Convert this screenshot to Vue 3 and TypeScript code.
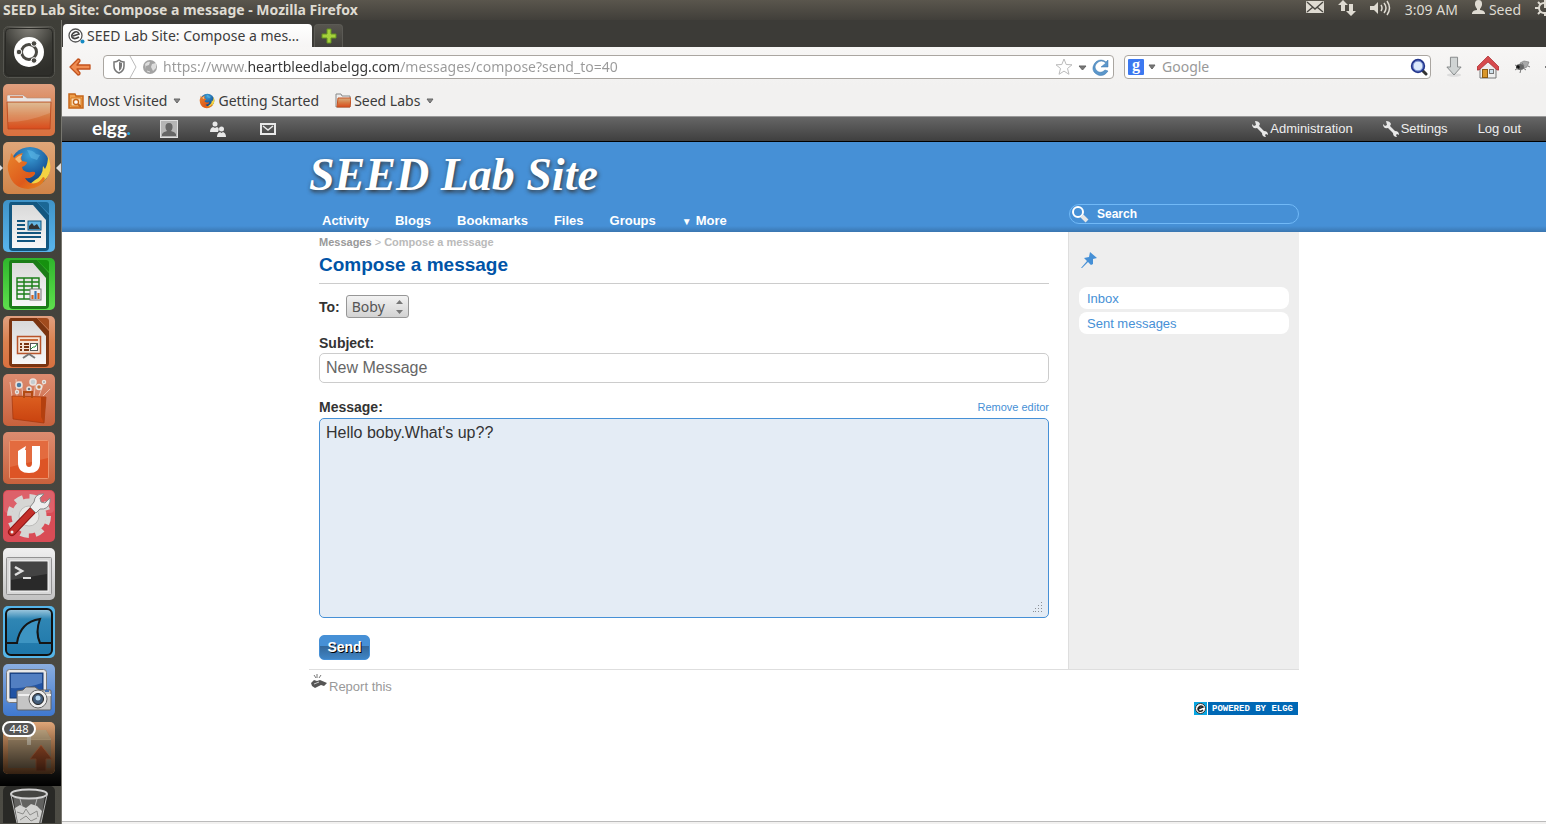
<script setup lang="ts">
import { ref } from 'vue'

const url = ref('https://www.heartbleedlabelgg.com/messages/compose?send_to=40')
const engineQuery = ref('')
const siteQuery = ref('')
const recipient = ref('Boby')
const subject = ref('New Message')
const body = ref("Hello boby.What's up??")

const siteMenu: string[] = ['Activity', 'Blogs', 'Bookmarks', 'Files', 'Groups']
const folders: string[] = ['Inbox', 'Sent messages']
</script>

<template>
  <div class="desktop">
    <svg class="defs" width="0" height="0" aria-hidden="true">
      <defs>
        <linearGradient id="orange" x1="0" y1="0" x2="0" y2="1"><stop offset="0" stop-color="#e0a080" /><stop offset=".5" stop-color="#d9814f" /><stop offset="1" stop-color="#d9703f" /></linearGradient>
        <linearGradient id="tan" x1="0" y1="0" x2="0" y2="1"><stop offset="0" stop-color="#dfa679" /><stop offset="1" stop-color="#d08448" /></linearGradient>
        <linearGradient id="rust" x1="0" y1="0" x2="0" y2="1"><stop offset="0" stop-color="#dc8c70" /><stop offset="1" stop-color="#c8613c" /></linearGradient>
        <linearGradient id="folder" x1="0" y1="0" x2="0" y2="1"><stop offset="0" stop-color="#d9b183" /><stop offset=".5" stop-color="#d67c45" /><stop offset="1" stop-color="#da4c1d" /></linearGradient>
        <linearGradient id="blue" x1="0" y1="0" x2="0" y2="1"><stop offset="0" stop-color="#3f93c8" /><stop offset="1" stop-color="#59b5ec" /></linearGradient>
        <linearGradient id="green" x1="0" y1="0" x2="0" y2="1"><stop offset="0" stop-color="#2fb52c" /><stop offset="1" stop-color="#5fe04e" /></linearGradient>
        <linearGradient id="paper" x1="0" y1="0" x2="0" y2="1"><stop offset="0" stop-color="#d9d9d9" /><stop offset="1" stop-color="#f8f8f8" /></linearGradient>
        <linearGradient id="silver" x1="0" y1="0" x2="0" y2="1"><stop offset="0" stop-color="#f0f0f0" /><stop offset="1" stop-color="#c2c2c2" /></linearGradient>
        <linearGradient id="shark" x1="0" y1="0" x2="0" y2="1"><stop offset="0" stop-color="#a3cbe0" /><stop offset=".22" stop-color="#2f86b4" /><stop offset="1" stop-color="#1d76a9" /></linearGradient>
        <linearGradient id="bag" x1="0" y1="0" x2="0" y2="1"><stop offset="0" stop-color="#dc5f20" /><stop offset="1" stop-color="#c9420f" /></linearGradient>
        <linearGradient id="shot" x1="0" y1="0" x2="0" y2="1"><stop offset="0" stop-color="#8aaee0" /><stop offset="1" stop-color="#3f78cf" /></linearGradient>
        <linearGradient id="shade" x1="0" y1="0" x2="0" y2="1"><stop offset="0" stop-color="#000" stop-opacity="0" /><stop offset="1" stop-color="#000" stop-opacity=".75" /></linearGradient>
        <radialGradient id="globe" cx=".5" cy=".2" r=".8"><stop offset="0" stop-color="#3ba0d8" /><stop offset=".6" stop-color="#1a5a9c" /><stop offset="1" stop-color="#10356d" /></radialGradient>
        <linearGradient id="fox" x1="0" y1="0" x2="1" y2="1"><stop offset="0" stop-color="#e8842c" /><stop offset=".6" stop-color="#de5a1b" /><stop offset="1" stop-color="#e98b1e" /></linearGradient>
        <radialGradient id="glow" cx=".5" cy="0" r=".9"><stop offset="0" stop-color="#85837c" /><stop offset=".6" stop-color="#3a3a35" /><stop offset="1" stop-color="#2e2e2a" /></radialGradient>
        <symbol id="firefox" viewBox="0 0 46 46">
          <circle cx="24" cy="22" r="20" fill="url(#globe)" />
          <path d="M21 5q6 0 9 4l4 1-3 5-6-2z" fill="#5db6e4" opacity=".6" />
          <path d="M42 11q6 15-3 24-8 9-20 8l10-8q8-4 8-14l2 3q3-5 3-13z" fill="#f4d342" />
          <path d="M40 33Q34 44 22 44 7 43 3 29 0 20 4 14l1-6q2 1 3 5 3-4 9-5-3 4-1 8l5 1q0 3-5 5l1 3q4 3 8 2 5-1 4 2-3 5-10 4 4 7 11 5 4-1 7-6 3 1 1 3z" fill="url(#fox)" />
          <path d="M9 14q4-4 7-4-3 4 0 6l-3 2z" fill="#f7b873" />
        </symbol>
        <symbol id="wrench" viewBox="0 0 16 16">
          <path d="M3 0q4 0 5 3l-1 2 5 5q4 0 4 4l-2-1-1 1 1 2q-4 0-4-4L5 7Q0 8 0 3l2 2 2-1z" fill="#e8e8e8" />
        </symbol>
      </defs>
    </svg>

    <header class="panel">
      <span class="panel-title">SEED Lab Site: Compose a message - Mozilla Firefox</span>
      <div class="indicators">
        <svg width="18" height="14" viewBox="0 0 18 14"><rect y="1" width="18" height="12" rx="1" fill="#dfdbd2" /><path d="M1 2l8 7 8-7M1 12l6-5M17 12l-6-5" fill="none" stroke="#4a4842" stroke-width="1.400" /></svg>
        <svg width="18" height="16" viewBox="0 0 18 16"><path d="M5 0l5 5H7v6H3V5H0zM11 4h4v7h3l-5 5-5-5h3z" fill="#dfdbd2" /></svg>
        <svg width="21" height="16" viewBox="0 0 21 16"><path d="M0 6h4l4-4v12l-4-4H0z" fill="#dfdbd2" /><path d="M11 5q2 3 0 6M14 3q4 5 0 10M17 1q5 7 0 14" fill="none" stroke="#dfdbd2" stroke-width="1.500" /></svg>
        <span class="clock">3:09 AM</span>
        <span class="user"><svg width="13" height="14" viewBox="0 0 13 14"><path d="M6.500 0q4 0 3.500 5-.5 2-2 4l0 1q4 0 5 3v1H0v-1q1-3 5-3V9Q3.500 7 3 5 2.500 0 6.500 0z" fill="#dfdbd2" /></svg>Seed</span>
        <svg width="11" height="16" viewBox="0 0 11 16"><path d="M9 3a5 5 0 0 0 0 10" fill="none" stroke="#dfdbd2" stroke-width="2" /><path d="M3 2l3 3M0 8h4M3 14l3-3M10 12v4M10 0v8" fill="none" stroke="#dfdbd2" stroke-width="2" /></svg>
      </div>
    </header>

    <div class="workspace">
      <nav class="launcher" aria-label="Launcher">
        <button aria-label="Dash home"><svg viewBox="0 0 52 52"><rect x=".5" y=".5" width="51" height="51" rx="5" fill="url(#glow)" stroke="#55554f" /><rect x="2.500" y="2.500" width="47" height="47" rx="4" fill="none" stroke="#292925" /><circle cx="26" cy="26" r="15" fill="#fff" /><circle cx="26" cy="26" r="7.500" fill="none" stroke="#4a4944" stroke-width="3" /><g fill="#4a4944" stroke="#fff"><circle cx="16" cy="26" r="2.800" /><circle cx="31" cy="17.500" r="2.800" /><circle cx="31" cy="34.500" r="2.800" /></g></svg></button>
        <button aria-label="Files"><svg viewBox="0 0 52 52"><rect width="52" height="52" rx="5" fill="url(#orange)" /><path d="M5 11h15l4 3h23q1 0 1 1v5H4v-8q0-1 1-1z" fill="#e9e6e4" stroke="#b58a76" stroke-width=".6" /><path d="M7 13h13" stroke="#d98a62" stroke-width="2" /><path d="M4 18h44l-1 27H5z" fill="url(#folder)" stroke="#b8441c" stroke-width=".8" /><path d="M5 19h42v10Q25 38 5 38z" fill="#fff" opacity=".15" /></svg></button>
        <button class="active" aria-label="Firefox"><svg viewBox="0 0 52 52"><rect width="52" height="52" rx="5" fill="url(#tan)" /><use href="#firefox" x="3" y="3" width="46" height="46" /></svg></button>
        <button aria-label="Writer"><svg viewBox="0 0 52 52"><rect width="52" height="52" rx="5" fill="url(#blue)" /><path d="M8 2h26l12 13v32q0 4-4 4H10q-4 0-4-4V6q0-4 2-4z" fill="#13567f" /><path d="M34 2h9q3 0 3 3v9z" fill="#1b6795" /><path d="M9 5h21l13 15v28H9z" fill="url(#paper)" /><path d="M14 21h8M14 25h8M14 29h8M14 33h24M14 37h24M14 41h18" stroke="#13567f" stroke-width="2" /><rect x="25" y="21" width="13" height="9" fill="#66b7e4" stroke="#13567f" /><path d="M26 29v-3l3-3 2 3 3-2 3 5z" fill="#333" /></svg></button>
        <button aria-label="Calc"><svg viewBox="0 0 52 52"><rect width="52" height="52" rx="5" fill="url(#green)" /><path d="M8 2h26l12 13v32q0 4-4 4H10q-4 0-4-4V6q0-4 2-4z" fill="#1b7d18" /><path d="M34 2h9q3 0 3 3v9z" fill="#16910f" /><path d="M9 5h21l13 15v28H9z" fill="url(#paper)" /><path d="M14 20h22v21H14zM14 24h22M14 28h22M14 32h22M14 36h22M21 20v21M29 20v21" fill="none" stroke="#1b7d18" stroke-width="1.400" /><rect x="27" y="31" width="11" height="11" fill="#eee" stroke="#777" /><path d="M29.500 41v-4M35.500 41v-6" stroke-width="2.200" stroke="#d5641e" /><path d="M32.500 41v-8" stroke-width="2.200" stroke="#3b78b5" /></svg></button>
        <button aria-label="Impress"><svg viewBox="0 0 52 52"><rect width="52" height="52" rx="5" fill="url(#orange)" /><path d="M8 2h26l12 13v32q0 4-4 4H10q-4 0-4-4V6q0-4 2-4z" fill="#7a3410" /><path d="M34 2h9q3 0 3 3v9z" fill="#a14b1d" /><path d="M9 5h21l13 15v28H9z" fill="url(#paper)" /><rect x="14.500" y="20.500" width="23" height="17" fill="#f4e3d5" stroke="#b8542a" stroke-width="1.500" /><path d="M17 24h18" stroke="#c96b3a" stroke-width="2" /><path d="M17 28h2M17 31h2M17 34h2M21 28h5M21 31h5M21 34h5" stroke="#7a3410" stroke-width="2" /><rect x="27.500" y="27.500" width="7" height="7" fill="#fff" stroke="#555" /><path d="M28 33l2-2 2 0 2-3" fill="none" stroke="#28963b" /><path d="M26 38l-6 4M26 38l6 4" stroke="#777" stroke-width="2" /></svg></button>
        <button aria-label="Software Center"><svg viewBox="0 0 52 52"><rect width="52" height="52" rx="5" fill="url(#rust)" /><path d="M9 22L7 8M14 22L13 5M20 22L18 7M31 22l2-16M36 22l5-14M40 22l7-7" stroke="#f5d8ca" stroke-width="1" opacity=".7" /><g stroke="#e9e3df" stroke-width="1.500"><circle cx="16" cy="11" r="3" fill="#4a7ca3" /><circle cx="30" cy="8" r="3" fill="#c6cdd0" /><circle cx="36" cy="13" r="2.500" fill="#c0763f" /><circle cx="26" cy="15" r="2" fill="#68798a" /><circle cx="14" cy="18" r="1.500" fill="#777" /><circle cx="41" cy="8" r="1.500" fill="#777" /></g><path d="M9 22l34 1-2 26-31-4z" fill="url(#bag)" stroke="#a2370d" stroke-width=".7" /><path d="M38 23l5 0-2 26-3-6z" fill="#b4400f" /><path d="M21 24v-6h8v6" fill="none" stroke="#b24b12" stroke-width="2" /></svg></button>
        <button aria-label="Ubuntu One"><svg viewBox="0 0 52 52"><rect width="52" height="52" rx="5" fill="url(#rust)" /><rect x="6.500" y="8.500" width="39" height="38" rx="1" fill="#dd5426" stroke="#ec946e" /><path d="M7 9h38v17L7 35z" fill="#e77b50" opacity=".6" /><path d="M15 19l8-5-1 4 1 0v13q0 4 3 4t3-4V14h8v17q0 10-11 10T15 31z" fill="#fff" /></svg></button>
        <button aria-label="System Settings"><svg viewBox="0 0 52 52"><rect width="52" height="52" rx="5" fill="#d94c56" /><rect x="1" y="1" width="50" height="22" rx="4" fill="#fff" opacity=".12" /><circle cx="26" cy="26" r="19.500" fill="none" stroke="#d6d6d4" stroke-width="5" stroke-dasharray="8.500 6.800" /><circle cx="26" cy="26" r="17.500" fill="#d6d6d4" /><circle cx="26" cy="26" r="10" fill="#e9e9e7" stroke="#bdbdbb" /><path d="M9 42l21-22" stroke="#8e1414" stroke-width="8" stroke-linecap="round" /><path d="M9 42l21-22" stroke="#c42f2a" stroke-width="6" stroke-linecap="round" /><path d="M27 17l6 6 4-4q8 1 10-7V8l-5 5-4-1-1-4 4-4q-9-1-10 8z" fill="#eee" stroke="#888" /><circle cx="9" cy="42" r="1.500" fill="#eee" /></svg></button>
        <button aria-label="Terminal"><svg viewBox="0 0 52 52"><rect width="52" height="52" rx="5" fill="url(#silver)" /><rect x="3.500" y="9.500" width="45" height="37" rx="1" fill="#d8d8d8" stroke="#929292" /><rect x="7" y="13" width="38" height="30" fill="#292929" stroke="#f8f8f8" /><path d="M8 14h36v12L8 32z" fill="#fff" opacity=".12" /><path d="M12 19l7 4-7 4" fill="none" stroke="#ddd" stroke-width="2.500" /><path d="M20 30h8" stroke="#ddd" stroke-width="2" /></svg></button>
        <button aria-label="Wireshark"><svg viewBox="0 0 52 52"><rect width="52" height="52" rx="5" fill="#55b5e8" /><rect x="3" y="3" width="46" height="46" rx="5" fill="url(#shark)" stroke="#111" stroke-width="2" /><path d="M3 37h11Q17 16 37 13q-5 13 0 24h12" fill="#3d94c2" stroke="#151515" stroke-width="2" /></svg></button>
        <button aria-label="Screenshot"><svg viewBox="0 0 52 52"><rect width="52" height="52" rx="5" fill="url(#shot)" /><rect x="3.500" y="5.500" width="40" height="33" rx="3" fill="#e8e8e8" stroke="#777" /><rect x="7" y="9" width="33" height="25" fill="#2254a4" stroke="#16386f" /><path d="M8 10h31v9Q22 25 8 24z" fill="#81a9df" opacity=".5" /><path d="M14 27l6-1 3-3h9l4 3h11q1 0 1 1v18q0 1-1 1H15q-1 0-1-1z" fill="#c5c5c5" stroke="#606060" /><path d="M15 31h33" stroke="#efefef" stroke-width="2" /><circle cx="35" cy="35" r="9" fill="#eee" stroke="#666" /><circle cx="35" cy="35" r="5.500" fill="#435c79" stroke="#222" /><circle cx="35" cy="34" r="2.500" fill="#b4d5ef" /><rect x="42" y="26" width="4" height="2" fill="#416fb3" /></svg></button>
        <button class="updater" aria-label="Software Updater"><svg viewBox="0 0 52 52"><rect width="52" height="52" rx="5" fill="url(#tan)" /><path d="M9 8h34l5 9v29H5V17z" fill="#b09572" /><path d="M5 17h43" stroke="#d2b68d" stroke-width="2" /><path d="M9 8h34l5 9H5z" fill="#c8ad86" /><rect x="24" y="8" width="4" height="15" fill="#ddd0b8" /><path d="M38 23l11 14h-6v12H33V37h-6z" fill="#b5582e" stroke="#dc7f4d" /><rect width="52" height="52" rx="5" fill="url(#shade)" /></svg><span class="badge">448</span></button>
        <button class="trash" aria-label="Trash"><svg viewBox="0 0 52 37"><rect width="52" height="44" rx="5" fill="#292926" /><path d="M10 9l4 28h24l4-28z" fill="#626260" /><ellipse cx="26" cy="8" rx="18" ry="4.500" fill="#454542" stroke="#d2d2d2" stroke-width="2" /><path d="M8 9l6 28M44 9l-6 28M17 13l2 7M34 13l-2 7" stroke="#b7b7b7" /><path d="M12 22l5-3 6 3 5-4 6 2 5 5-3 12H15z" fill="#d2d2d0" /><path d="M14 26l6 2 3-5 4 6 7-4 1 6M17 34l6-4 5 5 6-3" fill="none" stroke="#8d8d8b" /></svg></button>
      </nav>

      <div class="browser">
        <div class="tabs">
          <button class="tab"><svg width="17" height="16" viewBox="0 0 17 16"><circle cx="7.500" cy="7.500" r="6.500" fill="#fff" stroke="#555" stroke-width="1.300" /><path d="M5 8l6-2q-1-3-4-2-4 2-3 5 2 3 7 0" fill="none" stroke="#444" stroke-width="1.700" /><circle cx="14.500" cy="13.500" r="2" fill="#168bc4" /></svg><span>SEED Lab Site: Compose a mes…</span></button>
          <button class="new-tab" aria-label="Open a new tab"><svg width="16" height="16" viewBox="0 0 16 16"><path d="M6 1h4v5h5v4h-5v5H6v-5H1V6h5z" fill="#a6d13c" stroke="#649221" /></svg></button>
        </div>

        <div class="toolbar">
          <button class="bare" aria-label="Back"><svg width="24" height="20" viewBox="0 0 24 20"><path d="M10 2L2 10l8 8q2 0 2-2l-3-4h13V8H9l3-4q0-2-2-2z" fill="#f08d52" stroke="#c2521c" stroke-linejoin="round" stroke-width="1.300" /></svg></button>
          <div class="field address">
            <svg width="48" height="22" viewBox="0 0 48 22"><path d="M5 6q3 0 5-2 2 2 5 2v4q0 5-5 7-5-2-5-7z" fill="#fff" stroke="#777" stroke-width="1.500" /><path d="M10 6v9q3-2 3-5V7z" fill="#777" /><path d="M21 0l6 11-6 11" fill="none" stroke="#bbb" /><circle cx="41" cy="11" r="7" fill="#a3a3a3" /><path d="M36 8q3-3 5-2l-1 3-3 1v3zM43 8l4-1v5l-3 3-2-4z" fill="#ddd" /><path d="M38 15l3 1" stroke="#ddd" /></svg>
            <input v-model="url" class="url" type="text" aria-label="Address" />
            <svg width="58" height="20" viewBox="0 0 58 20"><path d="M10 2l2.200 5.500 5.800.3-4.500 3.700 1.500 5.800-5-3.200-5 3.200 1.500-5.800L2 7.800l5.800-.3z" fill="#fff" stroke="#bbb" /><path d="M25 9h7l-3.500 4z" fill="#777" stroke="#666" /><path d="M52 6q-5-4-9 0t0 8q4 3 8-1l3 1q-4 6-10 4-6-3-5-8 2-7 8-7 3 0 5 2l2-2v7h-7z" fill="#5c97cb" stroke="#3b77ad" stroke-width=".5" /></svg>
          </div>
          <div class="field engine">
            <span class="google" aria-hidden="true">g</span>
            <svg width="9" height="20" viewBox="0 0 9 20"><path d="M1 8h6l-3 4z" fill="#777" stroke="#666" /></svg>
            <input v-model="engineQuery" type="text" placeholder="Google" aria-label="Search with Google" />
            <button class="bare" aria-label="Search"><svg width="18" height="18" viewBox="0 0 18 18"><path d="M13 13l3 3" stroke="#333" stroke-width="3" stroke-linecap="round" /><circle cx="8" cy="8" r="6" fill="#dbe9fb" stroke="#24378d" stroke-width="2.400" /><circle cx="8" cy="8" r="5" fill="none" stroke="#7d95d6" /></svg></button>
          </div>
          <button class="bare" aria-label="Downloads"><svg width="16" height="24" viewBox="0 0 18 24"><ellipse cx="9" cy="21" rx="8" ry="2" fill="#ddd" /><path d="M5 1h8v11h4l-8 9-8-9h4z" fill="#d0d4d4" stroke="#7d8182" /></svg></button>
          <button class="bare" aria-label="Home"><svg width="22" height="24" viewBox="0 0 22 24"><path d="M3 10l8-7 8 7v13H3z" fill="#eee" stroke="#777" /><path d="M0 12L11 1l11 11v3h-2l-9-8-9 8H0z" fill="#d64a4d" stroke="#a32a2e" stroke-width=".7" /><rect x="5.500" y="14.500" width="5" height="8" fill="#d9962a" stroke="#8a5a12" /><rect x="12.500" y="14.500" width="4" height="4" fill="#cfe0ea" stroke="#777" /></svg></button>
          <button class="bare" aria-label="Extension"><svg width="16" height="14" viewBox="0 0 16 14"><path d="M6 3l4-2 5 1-2 5-5 2z" fill="#a9a9a9" stroke="#777" stroke-width=".6" /><ellipse cx="6" cy="7" rx="4" ry="3" fill="#666" /><circle cx="4" cy="7" r="1.700" fill="#111" /><path d="M1 5l2 1M1 10l3-2M6 13l1-4M12 10L9 8M14 6l2 1M8 3l2 3" stroke="#777" /></svg></button>
          <svg width="1" height="2" viewBox="0 0 1 2"><path d="M0 0h1v2H0z" fill="#777" /></svg>
        </div>

        <div class="bookmarks">
          <button><svg width="16" height="16" viewBox="0 0 16 16"><path d="M1 1h6l1 2h7v12H1z" fill="#f0a04b" stroke="#c5661a" stroke-width="1.500" /><path d="M3 5h10v8H3z" fill="#f9d9ad" stroke="#d57b22" /><circle cx="8" cy="9" r="2.500" fill="#fff" stroke="#c5661a" stroke-width="1.300" /><path d="M10 11l3 3" stroke="#c5661a" stroke-width="2" /></svg>Most Visited<svg class="caret" width="8" height="6" viewBox="0 0 8 6"><path d="M1 1h6L4 5z" fill="#888" stroke="#666" /></svg></button>
          <button><svg width="16" height="16"><use href="#firefox" width="16" height="16" /></svg>Getting Started</button>
          <button><svg width="16" height="16" viewBox="0 0 16 16"><path d="M1 1h5l1 2h8v11H1z" fill="#eee" stroke="#888" /><path d="M3 5h13l-1 9H2z" fill="url(#folder)" stroke="#c55223" /></svg>Seed Labs<svg class="caret" width="8" height="6" viewBox="0 0 8 6"><path d="M1 1h6L4 5z" fill="#888" stroke="#666" /></svg></button>
        </div>

        <div class="page">
          <nav class="topbar" aria-label="Account">
            <a href="#" class="logo">elgg<i>.</i></a>
            <a href="#" class="avatar" aria-label="Profile"><svg width="18" height="18" viewBox="0 0 18 18"><rect x=".5" y=".5" width="17" height="17" fill="#b5b5b5" stroke="#e0e0e0" /><path d="M9 3q4 0 3.500 5-.5 2-1.500 3 4 1 5 3v2H2v-2q1-2 5-3-1-1-1.500-3Q5 3 9 3z" fill="#666" /></svg></a>
            <a href="#" class="friends" aria-label="Friends"><svg width="16" height="16" viewBox="0 0 16 16"><g fill="#e8e8e8"><circle cx="5" cy="3" r="2.500" /><path d="M0 11q0-4 3-5l2 1 2-1q3 1 1 5z" /><circle cx="11.500" cy="8" r="2.500" /><path d="M7 16q0-4 3-5l1.500 1 1.500-1q3 1 3 5z" /></g></svg></a>
            <a href="#" aria-label="Messages"><svg width="16" height="16" viewBox="0 0 16 16"><path d="M1 3h14v10H1z" fill="none" stroke="#e8e8e8" stroke-width="2" /><path d="M3 5l5 4 5-4" fill="none" stroke="#e8e8e8" stroke-width="1.500" /></svg></a>
            <div class="account">
              <a href="#"><svg width="16" height="16"><use href="#wrench" width="16" height="16" /></svg>Administration</a>
              <a href="#"><svg width="16" height="16"><use href="#wrench" width="16" height="16" /></svg>Settings</a>
              <a href="#">Log out</a>
            </div>
          </nav>

          <div class="banner">
            <div class="inner">
              <h1><a href="#">SEED Lab Site</a></h1>
              <div class="site-row">
                <nav class="site-menu" aria-label="Site">
                  <a v-for="entry in siteMenu" :key="entry" href="#">{{ entry }}</a>
                  <a href="#"><span class="down">▼</span>More</a>
                </nav>
                <label class="site-search"><svg width="18" height="18" viewBox="0 0 18 18"><circle cx="7" cy="7" r="5" fill="none" stroke="#fff" stroke-width="2" /><path d="M11 11l5 5" stroke="#e6e6e6" stroke-width="4" /></svg><input v-model="siteQuery" type="text" placeholder="Search" aria-label="Search site" /></label>
              </div>
            </div>
          </div>

          <div class="inner content">
            <main>
              <div class="crumbs"><a href="#">Messages</a> <span>&gt;</span> Compose a message</div>
              <h2>Compose a message</h2>
              <form @submit.prevent>
                <div class="to-row">
                  <label for="to">To:</label>
                  <span class="select"><select id="to" v-model="recipient"><option>Boby</option></select><svg width="7" height="14" viewBox="0 0 7 14"><path d="M0 4l3.500-4L7 4zM0 10h7l-3.500 4z" fill="#777" /></svg></span>
                </div>
                <label for="subject">Subject:</label>
                <input id="subject" v-model="subject" type="text" />
                <div class="message-row"><label for="message">Message:</label><a href="#">Remove editor</a></div>
                <div class="editor">
                  <textarea id="message" v-model="body"></textarea>
                  <svg class="grip" width="10" height="10" viewBox="0 0 10 10"><path d="M8 0h1v1H8zM8 3h1v1H8zM5 3h1v1H5zM8 6h1v1H8zM5 6h1v1H5zM2 6h1v1H2zM8 9h1v1H8zM5 9h1v1H5zM2 9h1v1H2zM0 9h1v1H0z" fill="#8c8f94" /></svg>
                </div>
                <button class="send" type="submit">Send</button>
              </form>
            </main>
            <aside>
              <a href="#" class="pin" aria-label="Bookmark this page"><svg width="16" height="16" viewBox="0 0 16 16"><path d="M9 0l7 6-4 1v5l-2 1-3-3-6 6-1 0 6-7-3-3 5-1z" fill="#4690d6" /></svg></a>
              <a v-for="folder in folders" :key="folder" href="#" class="folder">{{ folder }}</a>
            </aside>
          </div>

          <footer class="inner">
            <a href="#" class="report"><svg width="16" height="16" viewBox="0 0 16 16"><path d="M0 9l3-3 3 1 3-1 7 3-3 3-3-1-6 3-3-2z" fill="#555" /><path d="M3 1l2 3M6 0v4M10 1L8 4" stroke="#777" /><path d="M3 10l5-2" stroke="#ccc" /></svg>Report this</a>
            <a href="#" class="powered"><svg width="14" height="13" viewBox="0 0 14 13"><path d="M0 0h13v13H0z" fill="#08a5e1" /><path d="M13 0h1v13h-1z" fill="#fff" /><circle cx="6.500" cy="6.500" r="5" fill="#fff" stroke="#333" /><path d="M4 7l5-2q-2-2-4 0-2 2 0 4 2 1 4-1" fill="none" stroke="#222" stroke-width="1.500" /></svg><span>POWERED BY ELGG</span></a>
          </footer>
        </div>
        <div class="status"></div>
      </div>
    </div>
  </div>
</template>

<style>
body {
  margin: 0;
}
</style>

<style scoped>
.desktop {
  min-height: 100vh;
  display: flex;
  flex-direction: column;
  background: #3c3b37;
  font: 14px/18px "Noto Sans", sans-serif;
  color: #3c3c3c;
}
.desktop, .desktop *, .desktop *::before, .desktop *::after {
  box-sizing: border-box;
}
.defs {
  position: absolute;
}
svg {
  display: block;
  flex: none;
}
button {
  font: inherit;
  color: inherit;
  border: 0;
  padding: 0;
  background: none;
}
input, select, textarea {
  font: inherit;
  color: inherit;
  outline: none;
}
a {
  text-decoration: none;
}
.panel {
  display: flex;
  justify-content: space-between;
  height: 20px;
  padding-left: 3px;
  background: linear-gradient(#5a564d, #413f3a);
  color: #dfdbd2;
  white-space: nowrap;
}
.panel-title {
  font-weight: bold;
  line-height: 19px;
}
.indicators {
  display: flex;
  align-items: flex-start;
  gap: 14px;
  line-height: 19px;
}
.user {
  display: flex;
  gap: 4px;
}
.workspace {
  flex: 1;
  display: flex;
}
.launcher {
  width: 62px;
  display: flex;
  flex-direction: column;
  align-items: flex-start;
  gap: 6px;
  padding: 6px 0 0 3px;
  background: linear-gradient(#3e3e38, #4b4a43 85%, #4c4b44);
  border-right: 1px solid #77766f;
}
.launcher button {
  position: relative;
  width: 52px;
}
.active::before, .active::after {
  content: "";
  position: absolute;
  top: 21px;
  border: 5px solid transparent;
}
.active::before {
  left: -3px;
  border-width: 3px;
  border-left-color: #ddd;
  border-right: 0;
  top: 23px;
}
.active::after {
  right: -6px;
  border-right-color: #ddd;
  border-left: 0;
}
.updater::before {
  content: "";
  position: absolute;
  inset: 0 -6px -12px -3px;
  background: linear-gradient(transparent, #000);
}
.launcher svg {
  position: relative;
}
.badge {
  position: absolute;
  left: -1px;
  top: -1px;
  width: 34px;
  border: 2px solid #fff;
  border-radius: 8px;
  background: #555;
  color: #fff;
  font-size: 11px;
  line-height: 12px;
}
.trash {
  margin-top: 6px;
}
.browser {
  flex: 1;
  min-width: 0;
  display: flex;
  flex-direction: column;
}
.tabs {
  display: flex;
  gap: 2px;
  align-items: flex-end;
  height: 27px;
  padding-left: 1px;
  background: #3c3b37;
}
.tab {
  display: flex;
  align-items: center;
  gap: 2px;
  width: 249px;
  height: 23px;
  padding-left: 5px;
  border-radius: 4px 4px 0 0;
  background: linear-gradient(#fff, #f6f5f4);
  white-space: nowrap;
}
.new-tab {
  display: flex;
  align-items: center;
  justify-content: center;
  width: 29px;
  height: 23px;
  border: 1px solid #5b5a55;
  border-bottom: 0;
  border-radius: 4px 4px 0 0;
  background: linear-gradient(#57554f, #403f3b);
}
.toolbar {
  display: flex;
  align-items: center;
  gap: 15px;
  height: 39px;
  padding-left: 6px;
  background: linear-gradient(#f7f6f5, #f2f1f0);
}
.field {
  display: flex;
  align-items: center;
  height: 24px;
  border: 1px solid #aaa6a1;
  border-radius: 4px;
  background: #fff;
}
.field input {
  flex: 1;
  min-width: 0;
  height: 20px;
  line-height: 20px;
  border: 0;
  padding: 0;
  background: none;
}
.address {
  flex: 1;
  gap: 6px;
  padding: 0 1px 0 5px;
  margin: 0 -5px 0 -4px;
}
.field .url {
  color: transparent;
  background: linear-gradient(90deg, #999 85px, #333 85px, #333 238px, #999 238px);
  background-clip: text;
}
.engine {
  width: 307px;
  gap: 4px;
  padding: 0 2px 0 3px;
}
.engine input {
  margin-left: 1px;
}
.engine input::placeholder {
  color: #999;
  opacity: 1;
}
.google {
  width: 16px;
  height: 16px;
  border-radius: 1px;
  background: #3c78f0;
  color: #fff;
  font: bold 16px/12px "Liberation Serif", serif;
  text-align: center;
}
.bookmarks {
  display: flex;
  gap: 16px;
  height: 31px;
  padding: 0 0 1px 6px;
  background: #f2f1f0;
  border-bottom: 1px solid #999;
}
.bookmarks button {
  display: flex;
  align-items: center;
  gap: 3px;
}
.caret {
  margin: 0 2px 0 3px;
}
.page {
  flex: 1;
  background: #fff;
  font: 13px/18px "Liberation Sans", Arial, sans-serif;
}
.topbar {
  display: flex;
  align-items: center;
  height: 25px;
  padding: 0 25px 0 30px;
  background: linear-gradient(#666, #3f3f3f);
  border-bottom: 1px solid #000;
}
.topbar a {
  display: flex;
  align-items: center;
  gap: 2px;
  color: #eee;
}
.topbar .logo {
  width: 68px;
  gap: 0;
  padding-bottom: 3px;
  font: bold 19px/20px Lato, sans-serif;
  color: #fff;
}
.logo i {
  color: #2aa5e0;
}
.avatar {
  margin-right: 32px;
}
.friends {
  margin-right: 34px;
}
.account {
  display: flex;
  gap: 30px;
  margin-left: auto;
}
.banner {
  background: linear-gradient(#4690d6 0 84px, #3a76b0);
}
.inner {
  max-width: 990px;
  margin: 0 auto;
}
h1 {
  margin: 0;
  padding-top: 6px;
  font: italic bold 46px/53px "Liberation Serif", serif;
  white-space: nowrap;
}
h1 a {
  color: #fff;
  text-shadow: 1px 2px 4px #333;
}
.site-row {
  display: flex;
  justify-content: space-between;
  height: 31px;
}
.site-menu {
  display: flex;
  align-items: flex-end;
  font-weight: bold;
}
.site-menu a {
  padding: 0 13px 2px;
  color: #fff;
}
.down {
  margin-right: 4px;
  font-size: 10px;
  line-height: 10px;
}
.site-search {
  display: flex;
  align-items: center;
  gap: 8px;
  width: 230px;
  height: 20px;
  margin-top: 3px;
  padding-left: 1px;
  border: 1px solid #71b9f7;
  border-radius: 10px;
  color: #fff;
}
.site-search input {
  flex: 1;
  min-width: 0;
  padding: 0;
  border: 0;
  background: none;
  font: bold 12px/16px "Liberation Sans", Arial, sans-serif;
}
.site-search input::placeholder {
  color: #fff;
  opacity: 1;
}
.content {
  display: flex;
  border-bottom: 1px solid #dedede;
}
main {
  flex: 1;
  min-width: 0;
  padding: 4px 19px 9px 10px;
}
.crumbs {
  font-weight: bold;
  font-size: 11px;
  line-height: 13px;
  color: #bababa;
}
.crumbs a {
  color: #999;
}
.crumbs span {
  font-weight: normal;
}
h2 {
  margin: 0 0 11px;
  padding: 3px 0 6px;
  border-bottom: 1px solid #ccc;
  color: #0054a7;
  font: bold 19px/25px "Liberation Sans", Arial, sans-serif;
}
label {
  display: block;
  color: #333;
  font-size: 14px;
  font-weight: bold;
}
.to-row {
  display: flex;
  align-items: center;
  gap: 6px;
  margin-bottom: 16px;
}
.select {
  display: grid;
  align-items: center;
}
.select select, .select svg {
  grid-area: 1 / 1;
}
.select svg {
  justify-self: end;
  margin-right: 6px;
  pointer-events: none;
}
select {
  width: 63px;
  height: 23px;
  padding: 0 5px;
  appearance: none;
  border: 1px solid #979797;
  border-radius: 3px;
  background: linear-gradient(#f2f2f2, #d3d3d3);
  color: #555;
  font: 14px/20px "Noto Sans", sans-serif;
}
#subject {
  display: block;
  width: 100%;
  height: 30px;
  margin: 1px 0 15px;
  padding: 0 6px 1px;
  border: 1px solid #ccc;
  border-radius: 5px;
  color: #666;
  font-size: 16px;
}
.message-row {
  display: flex;
  justify-content: space-between;
  margin-bottom: 2px;
}
.message-row a {
  color: #4690d6;
  font-size: 11px;
}
.editor {
  position: relative;
}
textarea {
  display: block;
  width: 100%;
  height: 200px;
  padding: 5px 6px;
  border: 1px solid #4690d6;
  border-radius: 5px;
  background: #e4ecf5;
  color: #333;
  font-size: 16px;
  resize: none;
}
.grip {
  position: absolute;
  right: 6px;
  bottom: 6px;
}
.send {
  display: block;
  width: 51px;
  height: 25px;
  margin-top: 17px;
  padding-bottom: 2px;
  border: 1px solid #4690d6;
  border-radius: 5px;
  background: linear-gradient(#4690d6 0 10px, #33679a 10px, #4085c5);
  color: #fff;
  font-size: 14px;
  font-weight: bold;
  text-shadow: 1px 1px 0 #000;
}
aside {
  width: 231px;
  padding: 20px 10px;
  border-left: 1px solid #dedede;
  background: #eee;
}
.pin {
  display: block;
  margin: 0 2px 19px;
}
.folder {
  display: block;
  margin-bottom: 3px;
  padding: 3px 8px 1px;
  border-radius: 8px;
  background: #fff;
  color: #4690d6;
}
footer {
  display: flex;
  justify-content: space-between;
}
.report {
  display: flex;
  gap: 2px;
  padding: 4px 2px;
  color: #999;
  line-height: 26px;
}
.powered {
  display: flex;
  height: 13px;
  margin: 32px 1px 0 0;
  padding-right: 5px;
  background: #0068b5;
  color: #fff;
  font: bold 9px/15px "Liberation Mono", monospace;
}
.powered span {
  padding-left: 4px;
}
.status {
  height: 3px;
  border-top: 1px solid #bbb;
  background: #f2f1f0;
}
</style>
